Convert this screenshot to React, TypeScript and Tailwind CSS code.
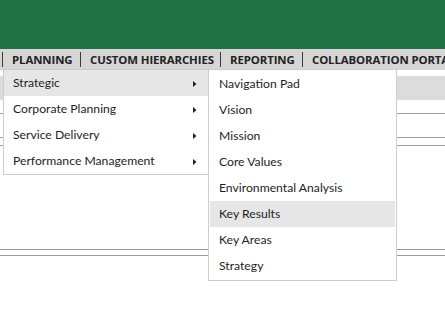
import React from "react";

const navItems = [
  { label: "PLANNING", width: "w-[78px]" },
  { label: "CUSTOM HIERARCHIES", width: "w-[140px]" },
  { label: "REPORTING", width: "w-[82px]" },
  { label: "COLLABORATION PORTAL", width: "w-[160px]" },
];

const planningMenu = [
  "Strategic",
  "Corporate Planning",
  "Service Delivery",
  "Performance Management",
];

const strategicMenu = [
  "Navigation Pad",
  "Vision",
  "Mission",
  "Core Values",
  "Environmental Analysis",
  "Key Results",
  "Key Areas",
  "Strategy",
];

const Caret: React.FC = () => (
  <svg width="4" height="6" viewBox="0 0 4 6" className="shrink-0">
    <path d="M0 0 L3.5 3 L0 6 Z" fill="#222" />
  </svg>
);

const App: React.FC = () => {
  return (
    <div
      className="relative w-[445px] h-[330px] overflow-hidden bg-white text-[#1e1e1e]"
      style={{ fontFamily: '"Open Sans", "Noto Sans", sans-serif' }}
    >
      {/* header */}
      <div className="h-[49px] bg-[#217346]" />

      {/* top nav */}
      <div className="h-[21px] bg-[#d6d6d6] flex items-center pl-[2px] whitespace-nowrap">
        {navItems.map((item) => (
          <div
            key={item.label}
            className={`${item.width} shrink-0 h-[15px] border-l border-[#3a3a3a] flex items-center pl-[9px] pt-[1px] text-[11.4px] font-bold tracking-[-0.1px] text-[#222]`}
          >
            {item.label}
          </div>
        ))}
      </div>

      {/* page content behind the menus */}
      <div className="pt-[6px]">
        <div className="h-[24px] bg-[#dcdcdc]" />
        <div className="h-[13px]" />
        <div className="border-t border-[#9c9c9c] h-[24px]" />
        <div className="border-t border-[#9c9c9c] h-[8px]" />
        <div className="border-t border-[#9c9c9c] h-[104px]" />
        <div className="border-t border-[#9c9c9c] h-[6px]" />
        <div className="border-t border-[#9c9c9c]" />
      </div>

      {/* planning dropdown */}
      <div
        className="absolute left-[3px] top-[69px] w-[206px] bg-white border border-[#cccccc]"
        style={{ fontFamily: "Lato, sans-serif" }}
      >
        {planningMenu.map((item, i) => (
          <div
            key={item}
            className={`h-[26px] flex items-center justify-between pl-[9px] pr-[11px] pt-[1px] text-[12.2px] ${
              i === 0 ? "bg-[#e6e6e6]" : ""
            }`}
          >
            <span>{item}</span>
            <Caret />
          </div>
        ))}
      </div>

      {/* strategic submenu */}
      <div
        className="absolute left-[208px] top-[69px] w-[189px] h-[212px] bg-white border border-[#cccccc] pt-[1px] px-[1px]"
        style={{ fontFamily: "Lato, sans-serif" }}
      >
        {strategicMenu.map((item) => (
          <div
            key={item}
            className={`h-[26px] flex items-center pl-[9px] pt-[1px] text-[12.2px] ${
              item === "Key Results" ? "bg-[#e6e6e6]" : ""
            }`}
          >
            {item}
          </div>
        ))}
      </div>
    </div>
  );
};

export default App;
